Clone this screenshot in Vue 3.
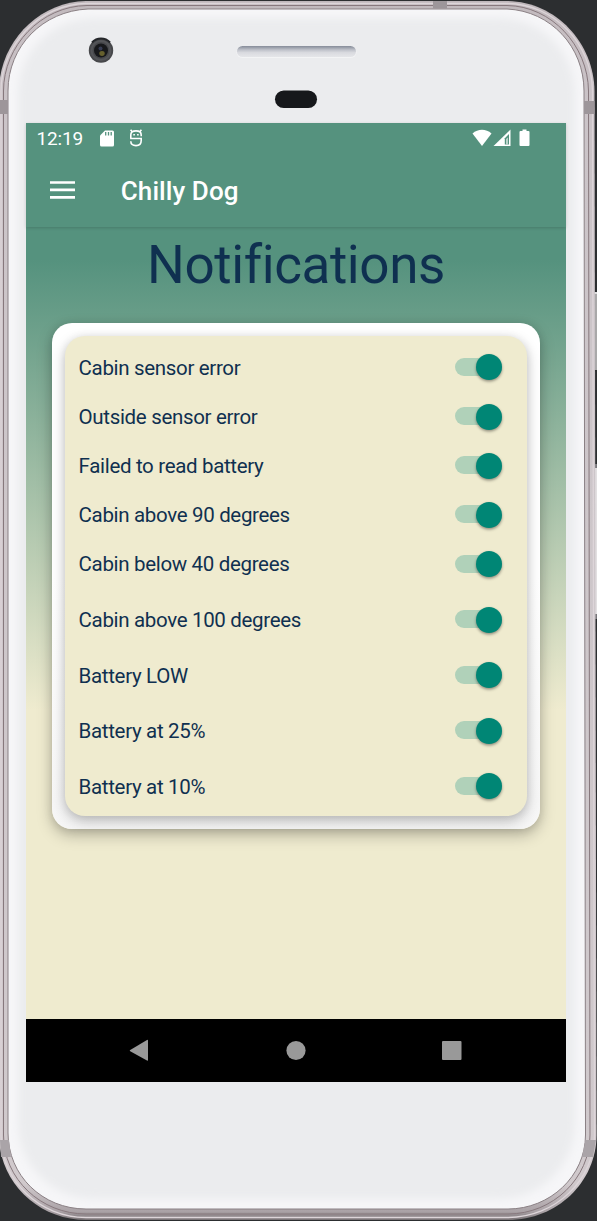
<script setup>
const items = [
  { label: 'Cabin sensor error' },
  { label: 'Outside sensor error' },
  { label: 'Failed to read battery' },
  { label: 'Cabin above 90 degrees' },
  { label: 'Cabin below 40 degrees' },
  { label: 'Cabin above 100 degrees', tall: true },
  { label: 'Battery LOW', tall: true },
  { label: 'Battery at 25%', tall: true },
  { label: 'Battery at 10%', tall: true },
]
</script>

<template>
  <div class="device">
    <svg class="shell" width="597" height="1221" viewBox="0 0 597 1221" aria-hidden="true">
      <defs>
        <linearGradient id="metal" x1="0" y1="0" x2="0" y2="1">
          <stop offset="0" stop-color="#bfb7bb" />
          <stop offset="0.02" stop-color="#c6bec2" />
          <stop offset="0.1" stop-color="#cbc4c8" />
          <stop offset="0.97" stop-color="#d0c9cc" />
          <stop offset="0.993" stop-color="#aaa2a6" />
          <stop offset="1" stop-color="#777174" />
        </linearGradient>
        <filter id="soft" x="-5%" y="-5%" width="110%" height="110%">
          <feGaussianBlur stdDeviation="4.5" />
        </filter>
        <clipPath id="faceClip">
          <path d="M88 9H507C551 11 584 47 584 91L585.500 1135C585.500 1176 550 1209 508 1209H86C42 1209 8 1175 8 1133V91C8 46 43 11 88 9Z" />
        </clipPath>
        <linearGradient id="slot" x1="0" y1="0" x2="0" y2="1">
          <stop offset="0" stop-color="#858b98" />
          <stop offset="0.35" stop-color="#bec1c9" />
          <stop offset="0.6" stop-color="#d9dadf" />
          <stop offset="1" stop-color="#e5e6e9" />
        </linearGradient>
      </defs>
      <rect x="592" y="292" width="6" height="78" fill="#a9a8a9" />
      <rect x="592" y="292" width="6" height="2" fill="#e0dfe0" />
      <rect x="592" y="464" width="6" height="155" fill="#77767a" />
      <rect x="592" y="468" width="6" height="146" fill="#e2dfe1" />
      <path d="M86 1H508C556 2 594 43 594.500 91L596.500 1135C596.500 1182 557 1220 508 1220H86C39 1220 -1 1183 -1 1135V91C-1 43 38 2 86 1Z" fill="url(#metal)" />
      <path d="M86 3.500H508C554 4 592 44 592.500 91L594.500 1135C594.500 1180 555 1217.500 508 1217.500H86C40 1217.500 1 1181 1 1135V91C1 45 40 4 86 3.500Z" fill="none" stroke="#ddd5d9" stroke-width="1.300" />
      <path d="M87 5.500H507C551 6 588 45 588.500 91L590 1135C590 1178 553 1214 508 1214H86C41 1214 3.500 1179 3.500 1135V91C3.500 46 41 6 87 5.500Z" fill="none" stroke="#87787d" stroke-width="1" />
      <path d="M88 9H507C551 11 584 47 584 91L585.500 1135C585.500 1176 550 1209 508 1209H86C42 1209 8 1175 8 1133V91C8 46 43 11 88 9Z" fill="#f6f6f8" stroke="#8a8084" stroke-width="1" />
      <g clip-path="url(#faceClip)">
        <rect x="18" y="18" width="557" height="1181" rx="76" fill="#ebecee" filter="url(#soft)" />
      </g>
      <g fill="#9d969a">
        <rect x="433" y="1" width="14" height="7.500" />
        <rect x="0" y="100" width="8" height="14" />
        <rect x="584" y="101" width="10.500" height="13" />
        <path d="M0 1140H9L11 1157H1Z" fill="#aaa4a8" />
        <path d="M585.500 1140H596L593 1157H582Z" fill="#aaa4a8" />
      </g>
      <circle cx="101" cy="50.500" r="12.200" fill="#47484b" />
      <circle cx="101" cy="50.500" r="9.500" fill="none" stroke="#545559" stroke-width="2" />
      <path d="M92 42.500A12 12 0 0 1 110 42.500" fill="none" stroke="#24262a" stroke-width="2" />
      <circle cx="101" cy="50.500" r="7" fill="#17181b" />
      <circle cx="100.500" cy="48.500" r="2" fill="#363b52" />
      <ellipse cx="102" cy="53.500" rx="2.700" ry="2.400" fill="#66602e" />
      <rect x="236.500" y="46.500" width="120" height="11.500" rx="5.700" fill="#f3f4f5" />
      <rect x="237" y="46" width="119" height="11" rx="5.500" fill="url(#slot)" />
      <rect x="275" y="90.500" width="42" height="17.500" rx="8.700" fill="#16181b" />
    </svg>

    <main class="screen">
      <header class="top">
        <div class="status">
          <span class="time">12:19</span>
          <svg class="sd" width="14" height="17" viewBox="0 0 14 17">
            <path d="M5 0.500H12.500Q14 0.500 14 2V15Q14 16.500 12.500 16.500H1.500Q0 16.500 0 15V5.500Z" fill="#fff" />
            <path d="M5.700 2V5.500M8.500 2V5.500M11.200 2V5.500" stroke="#55927e" stroke-width="1.300" />
          </svg>
          <svg class="bot" width="14" height="18" viewBox="0 0 14 18" fill="none" stroke="#fff" stroke-width="1.600">
            <path d="M3.200 2.800 1.600 0.800M10.800 2.800 12.400 0.800" />
            <path d="M1.800 9.300V6Q1.800 1.900 7 1.900T12.200 6V7.300" />
            <path d="M1.100 9.500H12.200V11.500Q12.200 16.600 7 16.600T1.800 12.200" />
            <path d="M4.300 5.800H5.900M8.100 5.800H9.700" />
          </svg>
          <svg class="signals" width="59" height="18" viewBox="0 0 59 18">
            <path d="M0.500 4.500C6 -0.500 14 -0.500 19.500 4.500L10 17Z" fill="#fff" />
            <path d="M21.500 17 38.500 0.500V17Z" fill="#fff" />
            <path d="M32.800 9.300 37 5V15.500H32.800Z" fill="#55927e" />
            <path d="M34.200 10 35.800 8.500V15.500H34.200Z" fill="#d5e4df" />
            <path d="M50.500 0.500H54.500V2H56.500Q57.500 2 57.500 3V16Q57.500 17 56.500 17H48.500Q47.500 17 47.500 16V3Q47.500 2 48.500 2H50.500Z" fill="#fff" />
          </svg>
        </div>
        <div class="toolbar">
          <svg class="menu" width="25" height="18" viewBox="0 0 25 18">
            <path d="M0 1.500H25M0 8.900H25M0 16.300H25" stroke="#fff" stroke-width="2.700" />
          </svg>
          <span class="app-name">Chilly Dog</span>
        </div>
      </header>

      <h1 class="title">Notifications</h1>

      <section class="outer-card">
        <div class="inner-card">
          <div v-for="item in items" :key="item.label" class="row" :class="{ tall: item.tall }">
            <span class="label">{{ item.label }}</span>
            <span class="switch"><span class="thumb"></span></span>
          </div>
        </div>
      </section>

      <nav class="nav">
        <svg width="540" height="63" viewBox="0 0 540 63" fill="#999">
          <path d="M104.200 31 121 21Q122 20.500 122 21.500V41Q122 42 121 41.500L104.200 32.200Q103.200 31.600 104.200 31Z" />
          <circle cx="270" cy="31.500" r="9.600" />
          <rect x="416" y="22" width="19.500" height="19" rx="1" />
        </svg>
      </nav>
    </main>
  </div>
</template>

<style>
body {
  margin: 0;
  background: #2c2e30;
}
</style>

<style scoped>
.device {
  position: relative;
  box-sizing: border-box;
  width: 597px;
  height: 1221px;
  padding: 123px 31px 139px 26px;
  overflow: hidden;
  background: #2c2e30;
  font-family: Roboto, sans-serif;
}

.shell {
  position: absolute;
  inset: 0;
}

.screen {
  position: relative;
  display: flex;
  flex-direction: column;
  width: 540px;
  height: 959px;
  background: linear-gradient(#55927e 0, #55927e 137px, #efebcf 587px);
}

.top {
  height: 104px;
  background: #55927e;
  box-shadow: 0 1px 3px rgba(0, 0, 0, 0.16);
}

.status {
  display: flex;
  align-items: center;
  height: 30px;
  padding-left: 10.5px;
  color: #fff;
}

.time {
  width: 63.5px;
  padding-top: 1px;
  font-size: 19px;
  letter-spacing: -0.15px;
  line-height: 30px;
}

.bot {
  margin-left: 15px;
}

.signals {
  margin-left: 328.5px;
}

.toolbar {
  display: flex;
  align-items: center;
  height: 74px;
  padding-left: 24.3px;
  color: #fff;
}

.app-name {
  margin: 2px 0 0 45.5px;
  font-size: 26px;
  font-weight: 500;
  letter-spacing: 0.08px;
}

.menu {
  margin-top: -1px;
}

.title {
  margin: 5px 0 0;
  height: 66px;
  line-height: 66px;
  text-align: center;
  font-size: 53px;
  font-weight: 400;
  letter-spacing: -0.4px;
  color: #0f3050;
}

.outer-card {
  box-sizing: border-box;
  width: 488px;
  height: 506px;
  margin: 25px 26px 0;
  padding: 13px;
  border-radius: 20px;
  background: linear-gradient(#fff 0, #fff 50%, #f6f6f6 100%);
  box-shadow: 0 6px 15px rgba(0, 0, 0, 0.25), 0 1px 10px rgba(0, 0, 0, 0.1);
}

.inner-card {
  box-sizing: border-box;
  height: 480px;
  padding: 6.5px 25px 0 13.6px;
  border-radius: 20px;
  background: #efebcf;
  box-shadow: 0 5px 14px rgba(0, 0, 0, 0.24), 0 1px 8px rgba(0, 0, 0, 0.08);
}

.row {
  display: flex;
  align-items: center;
  justify-content: space-between;
  height: 49.15px;
}

.row.tall {
  height: 55.5px;
}

.row.tall:nth-child(6) {
  margin-top: 3.3px;
}

.label {
  padding-top: 1px;
  font-size: 20.5px;
  letter-spacing: -0.33px;
  color: #0f3050;
}

.row.tall .label {
  padding-top: 2px;
}

.switch {
  display: flex;
  align-items: center;
  justify-content: flex-end;
  width: 47px;
  height: 18px;
  border-radius: 9px;
  background: #b0d1b9;
}

.thumb {
  width: 26px;
  height: 26px;
  margin-top: 0.6px;
  border-radius: 50%;
  background: #008675;
  box-shadow: 0 1.5px 3px rgba(0, 0, 0, 0.4);
}

.nav {
  height: 63px;
  margin-top: auto;
  background: #000;
}

.nav svg {
  display: block;
}
</style>
